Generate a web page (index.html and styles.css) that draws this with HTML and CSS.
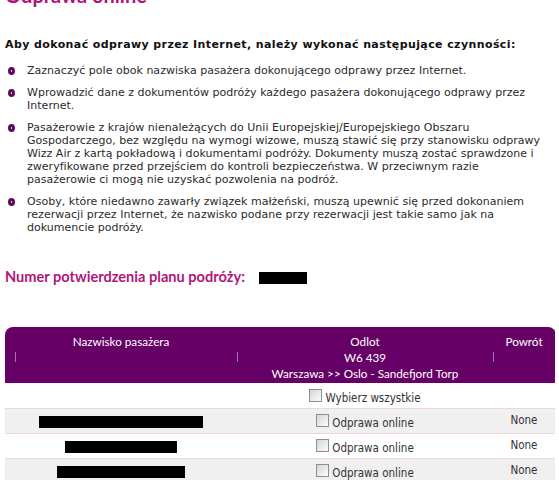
FILE: index.html
```html
<!DOCTYPE html>
<html lang="pl">
<head>
  <meta charset="UTF-8">
  <title>Odprawa online</title>
  <link rel="stylesheet" href="styles.css">
</head>
<body>
  <h1 class="page-title">Odprawa online</h1>

  <p class="intro">Aby dokonać odprawy przez Internet, należy wykonać następujące czynności:</p>

  <ul class="steps">
    <li>Zaznaczyć pole obok nazwiska pasażera dokonującego odprawy przez Internet.</li>
    <li>Wprowadzić dane z dokumentów podróży każdego pasażera dokonującego odprawy przez Internet.</li>
    <li>Pasażerowie z krajów nienależących do Unii Europejskiej/Europejskiego Obszaru Gospodarczego, bez względu na wymogi wizowe, muszą stawić się przy stanowisku odprawy Wizz Air z kartą pokładową i dokumentami podróży. Dokumenty muszą zostać sprawdzone i zweryfikowane przed przejściem do kontroli bezpieczeństwa. W przeciwnym razie<br>pasażerowie ci mogą nie uzyskać pozwolenia na podróż.</li>
    <li>Osoby, które niedawno zawarły związek małżeński, muszą upewnić się przed dokonaniem rezerwacji przez Internet, że nazwisko podane przy rezerwacji jest takie samo jak na dokumencie podróży.</li>
  </ul>

  <h2 class="confirm">Numer potwierdzenia planu podróży: <span class="redact code"></span></h2>

  <div class="pax-wrap">
    <table class="pax">
      <thead>
        <tr class="hrow-1">
          <th class="c-name">Nazwisko pasażera</th>
          <th class="c-out">Odlot</th>
          <th class="c-back">Powrót</th>
        </tr>
        <tr class="hrow-2">
          <th class="c-name"><span class="tick"></span></th>
          <th class="c-out tick-left">W6 439</th>
          <th class="c-back tick-left"></th>
        </tr>
        <tr class="hrow-3">
          <th></th>
          <th>Warszawa &gt;&gt; Oslo - Sandefjord Torp</th>
          <th></th>
        </tr>
      </thead>
      <tbody>
        <tr class="select-all">
          <td></td>
          <td><label><input type="checkbox">Wybierz wszystkie</label></td>
          <td></td>
        </tr>
        <tr class="odd">
          <td><span class="redact" style="width:164px"></span></td>
          <td><label><input type="checkbox">Odprawa online</label></td>
          <td class="none">None</td>
        </tr>
        <tr>
          <td><span class="redact" style="width:112px"></span></td>
          <td><label><input type="checkbox">Odprawa online</label></td>
          <td class="none">None</td>
        </tr>
        <tr class="odd">
          <td><span class="redact" style="width:128px"></span></td>
          <td><label><input type="checkbox">Odprawa online</label></td>
          <td class="none">None</td>
        </tr>
      </tbody>
    </table>
  </div>
</body>
</html>
```

FILE: styles.css
```css
body {
  margin: 0;
  padding: 0 3px 0 5px;
  background: #fff;
  color: #2b2b2b;
  font-family: "DejaVu Sans", Verdana, sans-serif;
  font-size: 11px;
}

.page-title {
  margin: -17px 0 0;
  font-family: Lato, sans-serif;
  font-size: 20px;
  line-height: 24px;
  font-weight: bold;
  color: #b3127a;
}

.intro {
  margin: 31px 0 0;
  line-height: 13px;
  font-weight: bold;
  letter-spacing: 0.4px;
  color: #111;
}

.steps {
  list-style: none;
  margin: 13px 0 0;
  padding: 0;
}

.steps li {
  position: relative;
  padding-left: 22px;
  margin-bottom: 9px;
  line-height: 13px;
  letter-spacing: 0.02px;
}

.steps li::before {
  content: "";
  position: absolute;
  left: 3px;
  top: 3px;
  width: 1px;
  height: 2px;
  border: 3px solid #5e0b5e;
  border-radius: 50%;
}

.confirm {
  margin: 34px 0 0;
  font-family: Lato, sans-serif;
  font-size: 14.6px;
  line-height: 18px;
  font-weight: bold;
  color: #b0167a;
}

.redact {
  display: inline-block;
  height: 12px;
  background: #000;
  vertical-align: middle;
}

.redact.code {
  width: 48px;
  margin-left: 11px;
}

.pax-wrap {
  margin-top: 41px;
  border-radius: 8px 8px 0 0;
  overflow: hidden;
}

.pax {
  width: 550px;
  border-collapse: separate;
  border-spacing: 0;
  table-layout: fixed;
}

.pax .c-name { width: 232px; }
.pax .c-out { width: 256px; }

.pax thead th {
  background: #660066;
  color: #fff;
  font-family: Lato, sans-serif;
  font-weight: normal;
  font-size: 11.7px;
  line-height: 16px;
  padding: 0;
  text-align: center;
  vertical-align: top;
}

.pax .hrow-1 th { padding-top: 6px; }
.pax .hrow-3 th { padding-bottom: 2px; }

.pax .tick {
  display: block;
  width: 0;
  height: 10px;
  margin: 3px 0 0 10px;
  border-left: 1px solid #a673a6;
}

.pax .tick-left {
  background-image: linear-gradient(#a673a6, #a673a6);
  background-size: 1px 10px;
  background-position: 0 3px;
  background-repeat: no-repeat;
}

.pax tbody td {
  height: 24px;
  padding: 0;
  text-align: center;
  vertical-align: middle;
  border-top: 1px solid #f2d5da;
  font-family: "DejaVu Sans Condensed", Tahoma, sans-serif;
  font-size: 11.5px;
  color: #333;
}

.pax tbody .select-all td {
  border-top: none;
  height: 25px;
}

.pax tbody tr.odd td { background: #f0f0f0; }

.pax td.none {
  vertical-align: top;
  padding-top: 4px;
  height: 20px;
}

.pax label {
  display: inline-block;
  padding-top: 2px;
}

.pax label input {
  -webkit-appearance: none;
  appearance: none;
  width: 13px;
  height: 13px;
  margin: 0 3px 0 0;
  border: 1px solid #8e8f8f;
  background: linear-gradient(135deg, #d4d4d4, #fdfdfd);
  vertical-align: 0;
}
```
